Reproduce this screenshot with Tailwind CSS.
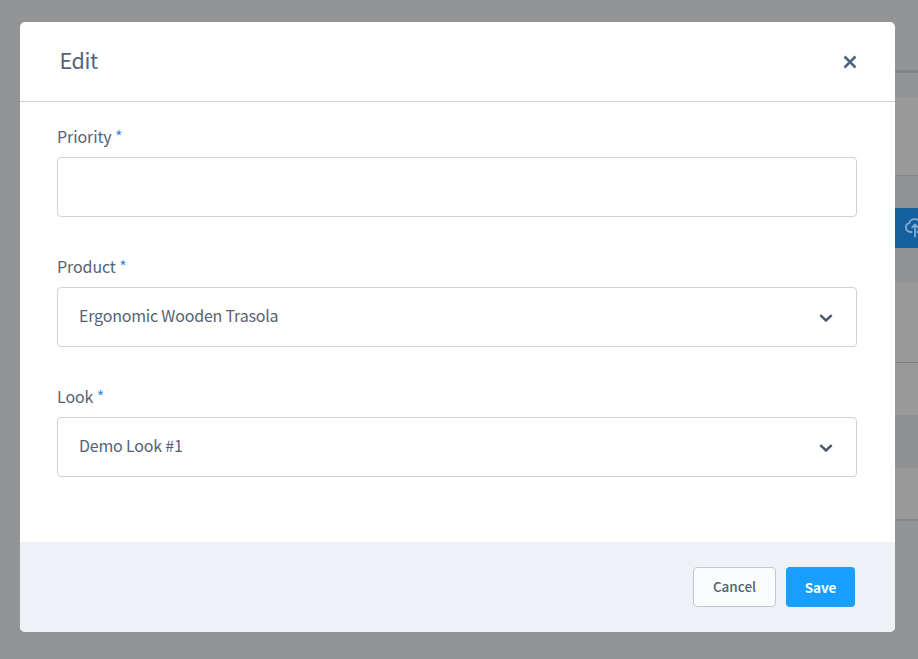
<!DOCTYPE html>
<html lang="en">
<head>
<meta charset="utf-8">
<title>Edit</title>
<script src="https://cdn.jsdelivr.net/npm/@tailwindcss/browser@4"></script>
</head>
<body class="relative h-[659px] w-[918px] overflow-hidden bg-[#939496] font-['Noto_Sans_CJK_SC','Noto_Sans',sans-serif] text-[#566274]">
  <!-- Dimmed page behind the dialog -->
  <div class="ml-auto flex h-full w-[40px] flex-col" aria-hidden="true">
    <div class="h-[70px] shrink-0"></div>
    <div class="h-[3px] shrink-0 bg-[#808488]"></div>
    <div class="h-6 shrink-0 bg-[#919395]"></div>
    <div class="h-[79px] shrink-0 border-b border-[#858688] bg-[#999999]"></div>
    <div class="h-8 shrink-0 bg-[#909294]"></div>
    <div class="flex h-10 shrink-0 items-center bg-[#14609e] pl-[26px]">
      <svg class="h-[22px] w-[26px] shrink-0" viewBox="0 0 26 22" fill="none" stroke="#83abcd" stroke-width="1.8" stroke-linecap="round" stroke-linejoin="round"><path d="M7.500 15H6a4.600 4.600 0 0 1-.7-9C6.400 1.500 13.500.5 15.700 5c5-.5 6.500 2.700 6.500 5 0 3-2 5-5 5h-4M11 19.500V7.500M8.200 10.300L11 7.500l2.800 2.800"/></svg>
    </div>
    <div class="h-[35px] shrink-0 bg-[#909294]"></div>
    <div class="h-20 shrink-0 border-b border-[#7d7e80] bg-[#999999]"></div>
    <div class="h-[52px] shrink-0 bg-[#999999]"></div>
    <div class="h-[53px] shrink-0 bg-[#8e9092]"></div>
    <div class="h-[53px] shrink-0 border-b-2 border-[#868789] bg-[#999999]"></div>
  </div>

  <div role="dialog" class="absolute left-5 top-[22px] flex h-[610px] w-[875px] flex-col overflow-hidden rounded-[5px] bg-white">
    <header class="flex h-20 shrink-0 items-center justify-between border-b border-[#cfd3d7] pl-[39.500px] pr-[38px]">
      <h1 class="-mt-[3px] text-[21.500px] leading-8 tracking-[-0.4px] text-[#52647c]">Edit</h1>
      <button class="mt-px" aria-label="Close">
        <svg class="size-[14px]" viewBox="0 0 14 14" fill="none" stroke="#4d6380" stroke-width="2.500"><path d="M1.500 1.500l11 11M12.500 1.500l-11 11"/></svg>
      </button>
    </header>

    <main class="flex grow flex-col gap-[37px] pl-[37px] pr-[38px] pt-[21px]">
      <div class="flex flex-col gap-2">
        <label class="h-[26px] text-[16px] leading-[26px] tracking-[-0.1px]">Priority <span class="text-[#398bdf]">*</span></label>
        <div class="h-[60px] rounded-[4px] border border-[#d0d3d6]"></div>
      </div>
      <div class="-mt-px flex flex-col gap-2">
        <label class="h-[26px] text-[16px] leading-[26px] tracking-[-0.1px]">Product <span class="text-[#398bdf]">*</span></label>
        <div class="flex h-[60px] items-center justify-between rounded-[4px] border border-[#d0d3d6] pl-[21px] pr-[23px]">
          <span class="-mt-1 text-[16px] leading-6 tracking-[-0.2px]">Ergonomic Wooden Trasola</span>
          <svg class="mt-[2px] h-2 w-[14px]" viewBox="0 0 14 8" fill="none" stroke="#46586c" stroke-width="2.400"><path d="M1.300 1.200L7 6.500l5.700-5.300"/></svg>
        </div>
      </div>
      <div class="-mt-px flex flex-col gap-2">
        <label class="h-[26px] text-[16px] leading-[26px] tracking-[-0.1px]">Look <span class="text-[#398bdf]">*</span></label>
        <div class="flex h-[60px] items-center justify-between rounded-[4px] border border-[#d0d3d6] pl-[21px] pr-[23px]">
          <span class="-mt-1 text-[16px] leading-6 tracking-[-0.2px]">Demo Look #1</span>
          <svg class="mt-[2px] h-2 w-[14px]" viewBox="0 0 14 8" fill="none" stroke="#46586c" stroke-width="2.400"><path d="M1.300 1.200L7 6.500l5.700-5.300"/></svg>
        </div>
      </div>
    </main>

    <footer class="flex h-[90px] shrink-0 items-center justify-end gap-[10px] bg-[#eff1f6] pr-10">
      <button class="h-10 w-[83px] rounded-[4px] border border-[#c0c8d1] bg-[#fafcfe] pb-[2px] text-[13.500px] font-medium leading-5 text-[#536171]">Cancel</button>
      <button class="h-10 w-[69px] rounded-[4px] bg-[#189eff] text-[13.500px] font-bold leading-5 tracking-[-0.1px] text-white">Save</button>
    </footer>
  </div>
</body>
</html>
